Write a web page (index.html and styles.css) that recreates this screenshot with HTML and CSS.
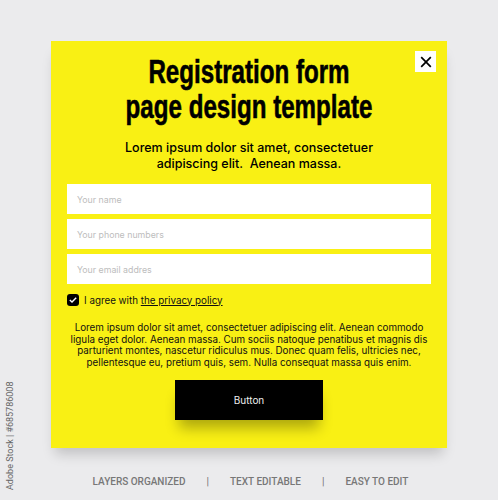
FILE: index.html
```html
<!DOCTYPE html>
<html>
<head>
<meta charset="utf-8">
<link rel="stylesheet" href="styles.css">
</head>
<body>
<div class="stage">
  <div class="card">
    <div class="close">
      <svg width="12" height="12" viewBox="0 0 12 12"><path d="M1.2 1.2L10.8 10.8M10.8 1.2L1.2 10.8" stroke="#000" stroke-width="1.7" fill="none"/></svg>
    </div>
    <h1 class="title"><span class="tl">Registration form</span><span class="tl">page design template</span></h1>
    <p class="sub">Lorem ipsum dolor sit amet, consectetuer<br>adipiscing elit.&nbsp; Aenean massa.</p>
    <div class="fields">
      <div class="field">Your name</div>
      <div class="field">Your phone numbers</div>
      <div class="field">Your email addres</div>
    </div>
    <div class="agree">
      <span class="check"><svg width="8" height="6" viewBox="0 0 8 6"><path d="M0.8 3L3 5L7.2 0.8" stroke="#fff" stroke-width="1.4" fill="none"/></svg></span>
      <span>I agree with <u>the privacy policy</u></span>
    </div>
    <p class="body">Lorem ipsum dolor sit amet, consectetuer adipiscing elit. Aenean commodo<br>ligula eget dolor. Aenean massa. Cum sociis natoque penatibus et magnis dis<br>parturient montes, nascetur ridiculus mus. Donec quam felis, ultricies nec,<br>pellentesque eu, pretium quis, sem. Nulla consequat massa quis enim.</p>
    <div class="btn-row"><div class="btn">Button</div></div>
  </div>
  <div class="footer">
    <span>LAYERS ORGANIZED</span><span class="sep">|</span><span>TEXT EDITABLE</span><span class="sep">|</span><span>EASY TO EDIT</span>
  </div>
  <div class="side">Adobe Stock | #685786008</div>
</div>
</body>
</html>
```
FILE: styles.css
```css
html, body { margin: 0; padding: 0; }
body {
  background: #ebebed;
  width: 498px;
  height: 500px;
  overflow: hidden;
  font-family: "Inter", "Liberation Sans", sans-serif;
}
.stage {
  position: relative;
  width: 498px;
  height: 500px;
  padding-top: 41px;
  box-sizing: border-box;
}
.card {
  position: relative;
  margin-left: 51px;
  width: 396px;
  height: 407px;
  background: #f9f014;
  box-sizing: border-box;
  padding: 13px 16px 0 16px;
  box-shadow: 0 10px 12px -4px rgba(0,0,0,0.18);
}
.close {
  position: absolute;
  top: 10px;
  right: 11px;
  width: 21px;
  height: 21px;
  background: #fff;
  display: flex;
  align-items: center;
  justify-content: center;
}
.title {
  margin: 0;
  text-align: center;
  font-family: "Liberation Sans", "Roboto", sans-serif;
  font-weight: bold;
  font-size: 34px;
  line-height: 35px;
  color: #000;
  -webkit-text-stroke: 0.6px #000;
}
.tl {
  display: block;
  white-space: nowrap;
  transform: scaleX(0.71);
  transform-origin: 50% 50%;
}
.sub {
  margin: 16px 0 0 0;
  text-align: center;
  font-size: 12.5px;
  line-height: 16px;
  font-weight: 500;
  color: #000;
}
.fields {
  margin-top: 12px;
  display: flex;
  flex-direction: column;
  gap: 5px;
}
.field {
  height: 30px;
  background: #fff;
  padding-left: 10px;
  display: flex;
  align-items: center;
  font-size: 8.8px;
  color: #bdbdbd;
}
.agree {
  margin-top: 10px;
  display: flex;
  align-items: center;
  gap: 5px;
  font-size: 9.8px;
  color: #111;
}
.check {
  width: 12px;
  height: 12px;
  border-radius: 3px;
  background: #000;
  display: flex;
  align-items: center;
  justify-content: center;
}
.body {
  margin: 16px -4px 0 -4px;
  text-align: center;
  font-size: 9.8px;
  line-height: 11.7px;
  color: #111;
  white-space: nowrap;
}
.btn-row {
  margin-top: 11px;
  display: flex;
  justify-content: center;
}
.btn {
  width: 148px;
  height: 40px;
  background: #000;
  color: #eee;
  font-size: 10px;
  display: flex;
  align-items: center;
  justify-content: center;
  box-shadow: 0 12px 14px -4px rgba(0,0,0,0.3);
}
.footer {
  margin-top: 28px;
  display: flex;
  justify-content: center;
  gap: 21px;
  font-family: "Roboto", sans-serif;
  font-weight: 500;
  font-size: 10px;
  color: #777;
  padding-left: 3px;
}
.side {
  position: absolute;
  left: 5px;
  top: 490px;
  transform: rotate(-90deg);
  transform-origin: 0 0;
  font-family: "Roboto", sans-serif;
  font-size: 9px;
  color: #666;
  white-space: nowrap;
}
```
